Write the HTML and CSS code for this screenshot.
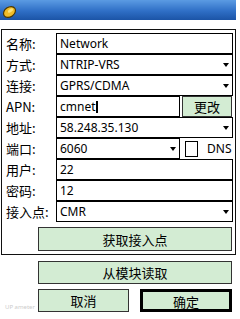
FILE: index.html
```html
<!DOCTYPE html>
<html lang="zh">
<head>
  <meta charset="UTF-8">
  <title>Network</title>
  <link rel="stylesheet" href="styles.css">
</head>
<body>
<div class="titlebar">
  <svg class="appicon" width="16" height="16" viewBox="0 0 16 16">
    <ellipse cx="8.5" cy="9" rx="6.5" ry="4.8" transform="rotate(-35 8.5 9)" fill="#f0bd2a" stroke="#4a3600" stroke-width="1.2"/>
    <ellipse cx="9.5" cy="7.5" rx="3" ry="1.6" transform="rotate(-35 9.5 7.5)" fill="#fbe27a"/>
  </svg>
</div>

<div class="group">
  <div class="row">
    <span class="label">名称:</span>
    <div class="field">Network</div>
  </div>
  <div class="row">
    <span class="label">方式:</span>
    <div class="field select">NTRIP-VRS<i class="arrow"></i></div>
  </div>
  <div class="row">
    <span class="label">连接:</span>
    <div class="field select">GPRS/CDMA<i class="arrow"></i></div>
  </div>
  <div class="row">
    <span class="label">APN:</span>
    <div class="field short">cmnet<span class="caret"></span></div>
    <button class="btn btn-small">更改</button>
  </div>
  <div class="row">
    <span class="label">地址:</span>
    <div class="field select">58.248.35.130<i class="arrow"></i></div>
  </div>
  <div class="row">
    <span class="label">端口:</span>
    <div class="field select short">6060<i class="arrow"></i></div>
    <span class="check"></span>
    <span class="dns">DNS</span>
  </div>
  <div class="row">
    <span class="label">用户:</span>
    <div class="field">22</div>
  </div>
  <div class="row">
    <span class="label">密码:</span>
    <div class="field">12</div>
  </div>
  <div class="row">
    <span class="label">接入点:</span>
    <div class="field select">CMR<i class="arrow"></i></div>
  </div>
  <button class="btn btn-wide btn-get">获取接入点</button>
</div>

<button class="btn btn-wide btn-read">从模块读取</button>

<div class="bottom">
  <span class="mark">UP ameter</span>
  <button class="btn btn-half">取消</button>
  <button class="btn btn-half btn-ok">确定</button>
</div>
</body>
</html>
```

FILE: styles.css
```css
body{
  margin: 0;
  background: #fff;
  font-family: "Noto Sans", "Noto Sans CJK SC", sans-serif;
  font-size: 13px;
  color: #000;
}
.titlebar{
  width: 236px;
  height: 20px;
  background: linear-gradient(#5b9be3, #2f6fc6 55%, #1b54a6);
}
.appicon{display: block; padding: 3px 0 0 1px;}

.group{
  box-sizing: border-box;
  width: 235px;
  height: 226px;
  margin: 9px 0 0 1px;
  border: 1px solid #111;
  padding: 3px 2px 0 4px;
}
.row{
  display: flex;
  align-items: center;
  height: 21px;
}
.label{
  width: 50px;
  font-family: "Noto Sans CJK SC", sans-serif;
  font-size: 13px;
}
.field{
  position: relative;
  box-sizing: border-box;
  flex: 1;
  height: 21px;
  border: 1px solid #000;
  padding: 0 3px;
  font-size: 12px;
  line-height: 19px;
  white-space: nowrap;
}
.field.short{flex: none; width: 124px;}
.arrow{
  position: absolute;
  right: 3px;
  top: 8px;
  border-left: 3px solid transparent;
  border-right: 3px solid transparent;
  border-top: 4px solid #000;
}
.caret{
  display: inline-block;
  width: 2px;
  height: 12px;
  background: #000;
  vertical-align: -2px;
}
.check{
  box-sizing: border-box;
  width: 13px;
  height: 16px;
  margin-left: 5px;
  border: 1px solid #000;
}
.dns{margin-left: 9px; font-size: 12px;}

.btn{
  box-sizing: border-box;
  display: block;
  background: #d3ecd3;
  border: 1px solid #333;
  padding: 0;
  font-family: "Noto Sans CJK SC", sans-serif;
  font-size: 13px;
  color: #000;
}
.btn-small{width: 50px; height: 21px; margin-left: 2px;}
.btn-wide{width: 194px; height: 24px;}
.btn-get{margin: 5px 0 0 32px;}
.btn-read{height: 23px; margin: 6px 0 0 38px;}

.bottom{
  display: flex;
  align-items: flex-end;
  margin-top: 5px;
}
.mark{
  width: 33px;
  padding-left: 5px;
  font-size: 6px;
  color: #ccc;
  line-height: 9px;
}
.btn-half{width: 91px; height: 23px;}
.btn-ok{width: 92px; margin-left: 11px; border: 3px solid #000;}
```
